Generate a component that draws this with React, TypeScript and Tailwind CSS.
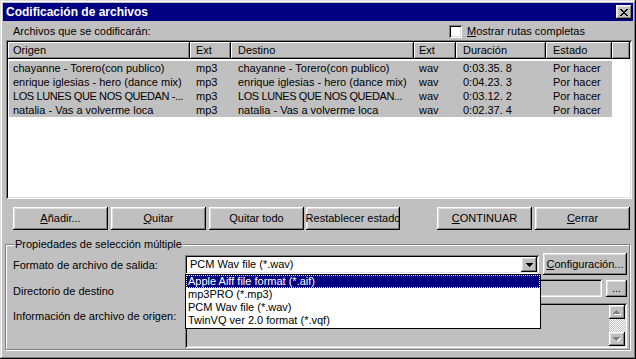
import React from "react";

const raised =
  "shadow-[inset_-1px_-1px_#000,inset_1px_1px_#fff,inset_-2px_-2px_#808080,inset_2px_2px_#dfdfdf]";
const sunken =
  "shadow-[inset_1px_1px_#808080,inset_-1px_-1px_#fff,inset_2px_2px_#000,inset_-2px_-2px_#dfdfdf]";
const headerCell =
  "shadow-[inset_-1px_-1px_#000,inset_1px_1px_#fff,inset_-2px_-2px_#808080]";

function Btn({ children, className = "" }: { children: React.ReactNode; className?: string }) {
  return (
    <div
      className={`flex items-center justify-center overflow-hidden whitespace-nowrap bg-[#c0c0c0] text-black ${raised} ${className}`}
    >
      {children}
    </div>
  );
}

const DownTri = ({ color = "#000" }: { color?: string }) => (
  <svg width="7" height="4" viewBox="0 0 7 4" shapeRendering="crispEdges">
    <path d="M0 0h7v1H0z M1 1h5v1H1z M2 2h3v1H2z M3 3h1v1H3z" fill={color} />
  </svg>
);

const DisabledArrow = ({ up }: { up: boolean }) => (
  <svg width="8" height="5" viewBox="0 0 8 5" shapeRendering="crispEdges">
    {up ? (
      <>
        <path d="M4 1h1v1H4z M3 2h3v1H3z M2 3h5v1H2z M1 4h7v1H1z" fill="#fff" />
        <path d="M3 0h1v1H3z M2 1h3v1H2z M1 2h5v1H1z M0 3h7v1H0z" fill="#808080" />
      </>
    ) : (
      <>
        <path d="M1 1h7v1H1z M2 2h5v1H2z M3 3h3v1H3z M4 4h1v1H4z" fill="#fff" />
        <path d="M0 0h7v1H0z M1 1h5v1H1z M2 2h3v1H2z M3 3h1v1H3z" fill="#808080" />
      </>
    )}
  </svg>
);

const headers = [
  { t: "Origen", c: "w-[182px] pl-[5px]" },
  { t: "Ext", c: "w-[41px] pl-[6px]" },
  { t: "Destino", c: "w-[183px] pl-[7px]" },
  { t: "Ext", c: "w-[42px] pl-[5px]" },
  { t: "Duración", c: "w-[90px] pl-[7px]" },
  { t: "Estado", c: "w-[66px] pl-[7px]" },
  { t: "", c: "w-[18px]" },
];

const rowCols = [
  "w-[181px] pl-[4px]",
  "w-[41px] pl-[6px]",
  "w-[183px] pl-[7px]",
  "w-[42px] pl-[5px]",
  "w-[90px] pl-[7px]",
  "w-[66px] pl-[7px]",
];

const rows = [
  ["chayanne - Torero(con publico)", "mp3", "chayanne - Torero(con publico)", "wav", "0:03.35. 8", "Por hacer"],
  ["enrique iglesias - hero (dance mix)", "mp3", "enrique iglesias - hero (dance mix)", "wav", "0:04.23. 3", "Por hacer"],
  ["LOS LUNES QUE NOS QUEDAN -...", "mp3", "LOS LUNES QUE NOS QUEDAN...", "wav", "0:03.12. 2", "Por hacer"],
  ["natalia - Vas a volverme loca", "mp3", "natalia - Vas a volverme loca", "wav", "0:02.37. 4", "Por hacer"],
];

const options = [
  "Apple Aiff file format (*.aif)",
  "mp3PRO (*.mp3)",
  "PCM Wav file (*.wav)",
  "TwinVQ ver 2.0 format (*.vqf)",
];

export default function App() {
  return (
    <div
      className={`w-[636px] h-[359px] bg-[#c0c0c0] p-[3px] flex flex-col overflow-hidden font-['Liberation_Sans',Arial,sans-serif] text-[11px] leading-[13px] text-black select-none shadow-[inset_-1px_-1px_#000,inset_1px_1px_#dfdfdf,inset_-2px_-2px_#808080,inset_2px_2px_#fff]`}
    >
      {/* Title bar */}
      <div className="h-[18px] shrink-0 bg-[#000080] flex items-center justify-between pl-[3px] pr-[1px]">
        <span className="text-white font-bold text-[12px] leading-[14px]">Codificación de archivos</span>
        <div className={`w-[16px] h-[14px] bg-[#c0c0c0] flex items-center justify-center ${raised}`}>
          <svg width="8" height="7" viewBox="0 0 8 7" shapeRendering="crispEdges">
            <path
              d="M0 0h2v1H0z M6 0h2v1H6z M1 1h2v1H1z M5 1h2v1H5z M2 2h4v1H2z M3 3h2v1H3z M2 4h4v1H2z M1 5h2v1H1z M5 5h2v1H5z M0 6h2v1H0z M6 6h2v1H6z"
              fill="#000"
            />
          </svg>
        </div>
      </div>

      {/* Label row */}
      <div className="h-[19px] shrink-0 flex items-center pl-[10px] pt-[2px]">
        <span className="w-[436px]">Archivos que se codificarán:</span>
        <div className={`w-[13px] h-[13px] bg-white ${sunken}`} />
        <span className="ml-[5px]">
          <span className="underline">M</span>ostrar rutas completas
        </span>
      </div>

      {/* List view */}
      <div className={`ml-[3px] w-[626px] h-[159px] shrink-0 bg-white p-[2px] flex flex-col ${sunken}`}>
        <div className="flex h-[17px] shrink-0">
          {headers.map((h, i) => (
            <div key={i} className={`h-full flex items-center bg-[#c0c0c0] whitespace-nowrap ${headerCell} ${h.c}`}>
              {h.t}
            </div>
          ))}
        </div>
        <div className="mt-[2px] ml-[1px] flex flex-col">
          {rows.map((r, i) => (
            <div key={i} className="flex h-[14px] w-[603px] bg-[#c0c0c0] items-center">
              {r.map((c, j) => (
                <div
                  key={j}
                  className={`overflow-hidden whitespace-nowrap ${rowCols[j]} ${
                    i === 2 && (j === 0 || j === 2) ? "tracking-[-0.4px]" : ""
                  }`}
                >
                  {c}
                </div>
              ))}
            </div>
          ))}
        </div>
      </div>

      {/* Buttons */}
      <div className="mt-[8px] h-[23px] shrink-0 flex pl-[10px]">
        <Btn className="w-[95px]">
          <span className="underline">A</span>ñadir...
        </Btn>
        <Btn className="ml-[3px] w-[95px]">
          <span className="underline">Q</span>uitar
        </Btn>
        <Btn className="ml-[3px] w-[95px]">Quitar todo</Btn>
        <Btn className="ml-[2px] w-[94px]">Restablecer estado</Btn>
        <Btn className="ml-[37px] w-[95px]">
          <span className="underline">C</span>ONTINUAR
        </Btn>
        <Btn className="ml-[3px] w-[95px]">
          <span className="underline">C</span>errar
        </Btn>
      </div>

      {/* Group box */}
      <div className="mt-[14px] ml-[2px] w-[625px] h-[106px] shrink-0 relative border border-[#808080] shadow-[inset_1px_1px_#fff,1px_1px_#fff] flex flex-col pl-[7px] pt-[8px]">
        <span className="absolute left-[8px] -top-[7px] px-[1px] bg-[#c0c0c0] leading-[13px]">
          Propiedades de selección múltiple
        </span>

        {/* Row 1 */}
        <div className="flex h-[22px] items-start">
          <span className="w-[172px] pt-[6px]">Formato de archivo de salida:</span>
          <div className="relative mt-[2px] w-[354px] h-[19px] z-10">
            <div className={`w-full h-full bg-white p-[2px] flex items-center ${sunken}`}>
              <span className="flex-1 pl-[3px] whitespace-nowrap">PCM Wav file (*.wav)</span>
              <div className={`w-[16px] h-[15px] bg-[#c0c0c0] flex items-center justify-center ${raised}`}>
                <DownTri />
              </div>
            </div>
            <div className="absolute left-0 top-full w-[356px] bg-white border border-black pb-[1px]">
              {options.map((o, i) => (
                <div
                  key={i}
                  className={
                    i === 0
                      ? "h-[13px] leading-[13px] pl-[2px] whitespace-nowrap bg-[#000080] text-white outline-1 outline-dotted outline-[#ffffa0] -outline-offset-1"
                      : "h-[13px] leading-[13px] pl-[2px] whitespace-nowrap"
                  }
                >
                  {o}
                </div>
              ))}
            </div>
          </div>
          <Btn className="ml-[4px] w-[84px] h-[22px]">
            <span className="underline">C</span>onfiguración...
          </Btn>
        </div>

        {/* Row 2 */}
        <div className="mt-[3px] flex h-[20px] items-start">
          <span className="w-[172px] pt-[7px]">Directorio de destino</span>
          <div className={`mt-[1px] w-[417px] h-[18px] bg-[#c0c0c0] ${sunken}`} />
          <Btn className="ml-[4px] mt-[2px] w-[21px] h-[17px]">...</Btn>
        </div>

        {/* Row 3 */}
        <div className="mt-[5px] flex h-[45px] items-start">
          <span className="w-[172px] pt-[7px]">Información de archivo de origen:</span>
          <div className={`w-[442px] h-[45px] bg-[#c0c0c0] p-[2px] flex justify-end ${sunken}`}>
            <div className="w-[16px] h-full flex flex-col">
              <div className={`h-[14px] shrink-0 bg-[#c0c0c0] flex items-center justify-center ${raised}`}>
                <DisabledArrow up />
              </div>
              <div className="flex-1 bg-[image:repeating-conic-gradient(#c0c0c0_0_25%,#ffffff_0_50%)] bg-size-[2px_2px]" />
              <div className={`h-[14px] shrink-0 bg-[#c0c0c0] flex items-center justify-center ${raised}`}>
                <DisabledArrow up={false} />
              </div>
            </div>
          </div>
        </div>
      </div>
    </div>
  );
}
